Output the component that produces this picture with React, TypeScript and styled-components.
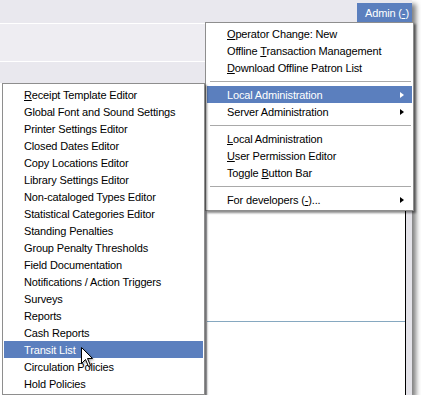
import React from "react"
import styled, { createGlobalStyle } from "styled-components"

const colors = {
  chrome: "#E9E8EE",
  chromeLight: "#EEEDF2",
  highlight: "#5B7FBE",
  menuBorder: "#8E8E8E",
  separator: "#A9A9A9",
  rule: "#86A8C0",
}

const GlobalStyle = createGlobalStyle`
  body {
    margin: 0;
    background: #ffffff;
    font-family: "Liberation Sans", Arial, sans-serif;
    font-size: 11px;
  }
`

type Entry =
  | { kind: "item"; label: React.ReactNode; active?: boolean; arrow?: boolean }
  | { kind: "sep" }

const U = ({ children }: { children: React.ReactNode }) => <u>{children}</u>

const adminEntries: Entry[] = [
  { kind: "item", label: <><U>O</U>perator Change: New</> },
  { kind: "item", label: <>Offline <U>T</U>ransaction Management</> },
  { kind: "item", label: <><U>D</U>ownload Offline Patron List</> },
  { kind: "sep" },
  { kind: "item", label: "Local Administration", active: true, arrow: true },
  { kind: "item", label: "Server Administration", arrow: true },
  { kind: "sep" },
  { kind: "item", label: <><U>L</U>ocal Administration</> },
  { kind: "item", label: <><U>U</U>ser Permission Editor</> },
  { kind: "item", label: <>Toggle <U>B</U>utton Bar</> },
  { kind: "sep" },
  { kind: "item", label: <>For developers (<U>-</U>)...</>, arrow: true },
]

const localAdminItems: React.ReactNode[] = [
  <><U>R</U>eceipt Template Editor</>,
  "Global Font and Sound Settings",
  "Printer Settings Editor",
  "Closed Dates Editor",
  "Copy Locations Editor",
  "Library Settings Editor",
  "Non-cataloged Types Editor",
  "Statistical Categories Editor",
  "Standing Penalties",
  "Group Penalty Thresholds",
  "Field Documentation",
  "Notifications / Action Triggers",
  "Surveys",
  "Reports",
  "Cash Reports",
  "Transit List",
  "Circulation Policies",
  "Hold Policies",
]

const App = () => {
  return (
    <>
      <GlobalStyle />
      <Window>
        <TopBar>
          <AdminButton>
            Admin (<U>-</U>)
          </AdminButton>
        </TopBar>
        <ToolBand />
        <LowerBand />
        <Content>
          <Blank />
          <Pane>
            <PaneRule />
          </Pane>
          <Frame />
        </Content>

        <AdminMenu>
          {adminEntries.map((entry, i) =>
            entry.kind === "sep" ? (
              <Separator key={i} />
            ) : (
              <Item key={i} $active={entry.active} $indent={20}>
                <span>{entry.label}</span>
                {entry.arrow && <Arrow $active={entry.active} />}
              </Item>
            )
          )}
        </AdminMenu>

        <SubMenu>
          {localAdminItems.map((label, i) => (
            <Item key={i} $active={i === 15} $indent={20}>
              <span>{label}</span>
            </Item>
          ))}
        </SubMenu>

        <Cursor width="13" height="21" viewBox="0 0 13 21">
          <path
            d="M0.5 0.5 L0.5 16.5 L4.5 12.5 L7.5 19.5 L9.5 18.5 L6.5 11.5 L11.5 11.5 Z"
            fill="#ffffff"
            stroke="#000000"
            strokeWidth="1"
            strokeLinejoin="miter"
          />
        </Cursor>
      </Window>
    </>
  )
}

const Window = styled.div`
  position: relative;
  width: 412px;
  height: 395px;
  display: flex;
  flex-direction: column;
  background: #ffffff;
  box-shadow: 4px 4px 5px rgba(0, 0, 0, 0.5);
  letter-spacing: -0.15px;
  color: #000;
`

const TopBar = styled.div`
  height: 23px;
  display: flex;
  justify-content: flex-end;
  align-items: flex-end;
  background: ${colors.chrome};
  border-bottom: 1px solid #ffffff;
`

const AdminButton = styled.div`
  height: 19px;
  margin-bottom: 1px;
  padding: 0 0 0 8px;
  width: 47px;
  display: flex;
  align-items: center;
  white-space: nowrap;
  background: ${colors.highlight};
  color: #ffffff;
  font-size: 11px;
`

const ToolBand = styled.div`
  height: 37px;
  background: ${colors.chromeLight};
  border-bottom: 1px solid #ffffff;
`

const LowerBand = styled.div`
  height: 21px;
  background: ${colors.chrome};
`

const Content = styled.div`
  flex: 1;
  display: grid;
  grid-template-columns: 205px 1fr 6px;
  background: #ffffff;
`

const Blank = styled.div`
  background: #ffffff;
`

const Pane = styled.div`
  border-left: 2px solid #c8c8cc;
  border-right: 1px solid #000000;
  padding-top: 238px;
`

const PaneRule = styled.div`
  height: 1px;
  background: ${colors.rule};
`

const Frame = styled.div`
  background: #e4e3e9;
`

const MenuPanel = styled.div`
  position: absolute;
  background: #ffffff;
  border: 1px solid ${colors.menuBorder};
  padding: 2px 1px;
  box-shadow: 2px 2px 2px rgba(0, 0, 0, 0.45);
  display: flex;
  flex-direction: column;
`

const AdminMenu = styled(MenuPanel)`
  top: 22px;
  left: 205px;
  width: 205px;
`

const SubMenu = styled(MenuPanel)`
  top: 83px;
  left: 2px;
  width: 199px;
`

const Item = styled.div<{ $active?: boolean; $indent: number }>`
  height: 17px;
  display: flex;
  align-items: center;
  justify-content: space-between;
  padding: 0 8px 0 ${(p) => p.$indent}px;
  white-space: nowrap;
  background: ${(p) => (p.$active ? colors.highlight : "transparent")};
  color: ${(p) => (p.$active ? "#ffffff" : "#000000")};

  u {
    text-decoration-thickness: 1px;
    text-underline-offset: 1px;
  }
`

const Arrow = styled.span<{ $active?: boolean }>`
  width: 0;
  height: 0;
  border-top: 3.5px solid transparent;
  border-bottom: 3.5px solid transparent;
  border-left: 4px solid ${(p) => (p.$active ? "#ffffff" : "#000000")};
`

const Separator = styled.div`
  height: 10px;
  display: flex;
  align-items: center;
  padding: 0 1px 0 3px;

  &::before {
    content: "";
    flex: 1;
    height: 1px;
    background: ${colors.separator};
  }
`

const Cursor = styled.svg`
  position: absolute;
  left: 81px;
  top: 347px;
  filter: drop-shadow(1px 1px 1px rgba(0, 0, 0, 0.35));
`

export default App
